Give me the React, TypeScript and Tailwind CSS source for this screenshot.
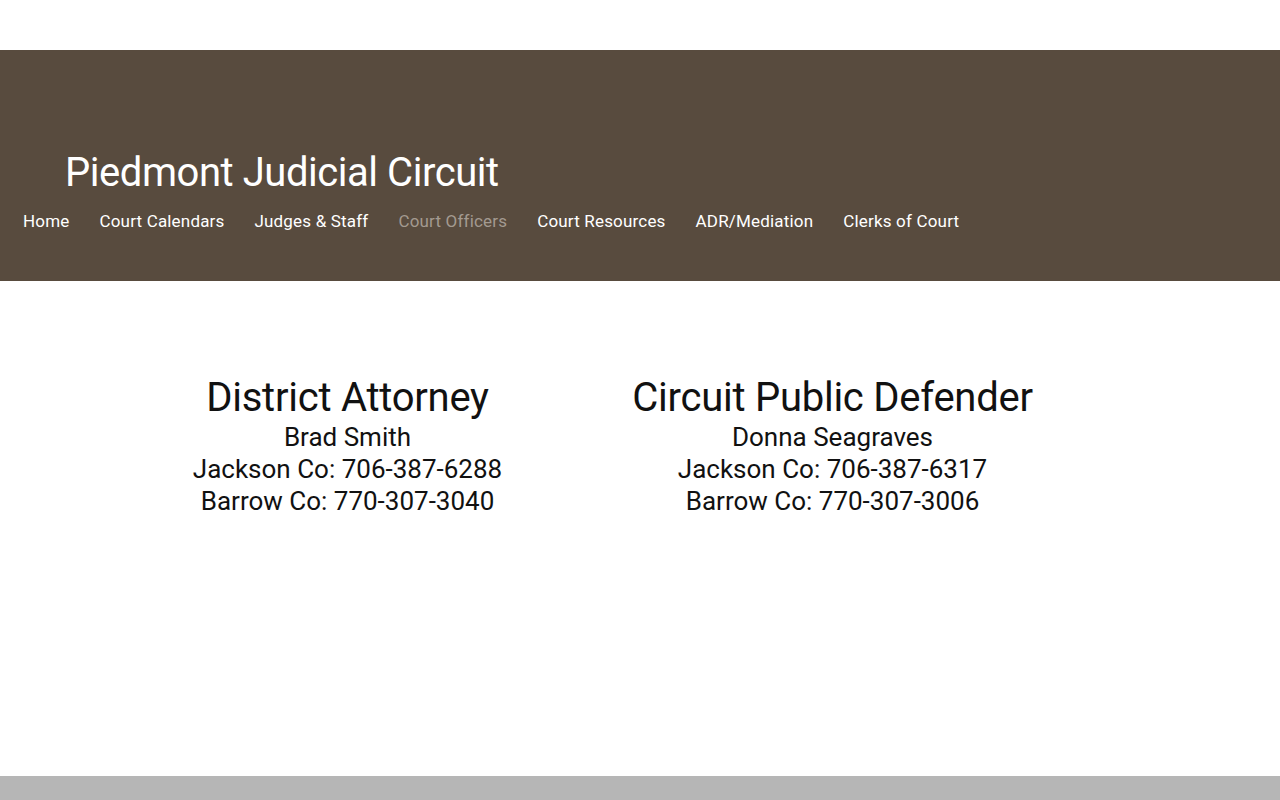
import React from 'react';

const navItems = [
  { label: 'Home', active: false },
  { label: 'Court Calendars', active: false },
  { label: 'Judges & Staff', active: false },
  { label: 'Court Officers', active: true },
  { label: 'Court Resources', active: false },
  { label: 'ADR/Mediation', active: false },
  { label: 'Clerks of Court', active: false },
];

const officers = [
  {
    title: 'District Attorney',
    name: 'Brad Smith',
    jackson: '706-387-6288',
    barrow: '770-307-3040',
  },
  {
    title: 'Circuit Public Defender',
    name: 'Donna Seagraves',
    jackson: '706-387-6317',
    barrow: '770-307-3006',
  },
];

const App: React.FC = () => {
  return (
    <div className="min-h-screen bg-white flex flex-col font-['Roboto',sans-serif]">
      <div className="h-[50px]" />
      <header className="bg-[#584b3e] h-[231px] flex flex-col">
        <h1 className="mt-[99px] ml-[65px] text-[40px] leading-[48px] text-white font-normal tracking-[-0.45px]">
          Piedmont Judicial Circuit
        </h1>
        <nav className="mt-[12px] ml-[23px] flex gap-[30px]">
          {navItems.map((item) => (
            <a
              key={item.label}
              href="#"
              className={
                'text-[17px] leading-[24px] font-normal tracking-[0.18px] ' +
                (item.active ? 'text-[#a39a90]' : 'text-white')
              }
            >
              {item.label}
            </a>
          ))}
        </nav>
      </header>

      <main className="flex-1 pt-[93px]">
        <div className="ml-[105px] flex">
          {officers.map((o) => (
            <div key={o.title} className="w-[485px] flex flex-col items-center text-center text-[#111]">
              <h2 className="text-[40px] leading-[48px] font-normal tracking-[-0.25px]">{o.title}</h2>
              <p className="text-[26px] leading-[32px] -mt-[1px]">{o.name}</p>
              <p className="text-[26px] leading-[32px]">Jackson Co: {o.jackson}</p>
              <p className="text-[26px] leading-[32px]">Barrow Co: {o.barrow}</p>
            </div>
          ))}
        </div>
      </main>

      <footer className="h-[24px] bg-[#b6b6b6]" />
    </div>
  );
};

export default App;
